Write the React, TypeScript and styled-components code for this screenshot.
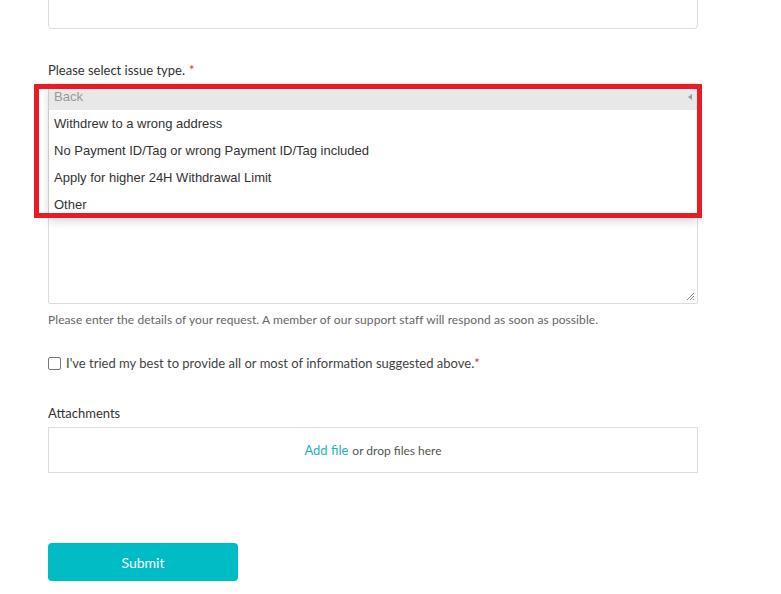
import styled, { createGlobalStyle } from 'styled-components';

const GlobalStyle = createGlobalStyle`
  body {
    margin: 0;
    background: #fff;
    font-family: Lato, "Open Sans", sans-serif;
    color: #333;
    overflow: hidden;
  }
`;

const Page = styled.div`
  width: 781px;
  height: 594px;
  padding: 0 84px 0 48px;
  box-sizing: border-box;
  position: relative;
`;

const Form = styled.form`
  display: flex;
  flex-direction: column;
  width: 650px;
`;

const TextInput = styled.div`
  height: 41px;
  margin-top: -12px;
  border: 1px solid #ddd;
  border-radius: 4px;
  box-sizing: border-box;
`;

const Label = styled.label<{ $top: number }>`
  display: block;
  margin-top: ${(p) => p.$top}px;
  font-size: 13px;
  line-height: 18px;
  color: #333;
`;

const Required = styled.span<{ $gap?: number }>`
  color: #e0323a;
  margin-left: ${(p) => p.$gap ?? 4}px;
`;

const SelectWrap = styled.div`
  position: relative;
  margin-top: 4px;
`;

const SelectBox = styled.div`
  height: 40px;
  border: 1px solid #ddd;
  border-radius: 4px;
  box-sizing: border-box;
`;

const Menu = styled.ul`
  position: absolute;
  top: 0;
  left: 0;
  right: 0;
  margin: 0;
  padding: 0;
  list-style: none;
  background: #fff;
  border-left: 1px solid #ccc;
  box-shadow: 0 4px 8px rgba(0, 0, 0, 0.14);
  font-family: "Liberation Sans", Arial, sans-serif;
  font-size: 13px;
  z-index: 2;
`;

const MenuItem = styled.li<{ $back?: boolean }>`
  display: flex;
  align-items: center;
  justify-content: space-between;
  height: 27px;
  padding: 0 6px 0 5px;
  color: ${(p) => (p.$back ? '#999' : '#333')};
  background: ${(p) => (p.$back ? '#e8e8e8' : '#fff')};
`;

const Caret = styled.span`
  width: 0;
  height: 0;
  border-top: 3px solid transparent;
  border-bottom: 3px solid transparent;
  border-right: 4px solid #999;
`;

const TextArea = styled.div`
  position: relative;
  height: 145px;
  margin-top: 36px;
  border: 1px solid #ddd;
  border-radius: 2px;
  box-sizing: border-box;
`;

const Grip = styled.svg`
  position: absolute;
  right: 2px;
  bottom: 2px;
`;

const Hint = styled.p`
  margin: 7px 0 0;
  font-size: 12px;
  line-height: 18px;
  letter-spacing: 0.08px;
  color: #666;
`;

const CheckRow = styled.label`
  display: flex;
  align-items: center;
  gap: 5px;
  margin-top: 25px;
  font-size: 13px;
  line-height: 18px;
  color: #444;
`;

const Box = styled.span`
  width: 13px;
  height: 13px;
  border: 1px solid #777;
  border-radius: 2px;
  box-sizing: border-box;
`;

const Drop = styled.div`
  display: flex;
  justify-content: center;
  align-items: center;
  height: 46px;
  margin-top: 5px;
  border: 1px solid #ddd;
  box-sizing: border-box;
  font-size: 12px;
  color: #555;
`;

const AddLink = styled.span`
  color: #1ab4c1;
  margin-right: 4px;
  font-size: 13px;
`;

const Submit = styled.button`
  margin-top: 70px;
  width: 190px;
  height: 38px;
  border: none;
  border-radius: 4px;
  background: #00bcc5;
  color: #fff;
  font-family: Lato, "Open Sans", sans-serif;
  font-size: 14px;
  cursor: pointer;
`;

const Highlight = styled.div`
  position: absolute;
  left: 34px;
  top: 84px;
  width: 668px;
  height: 134px;
  border: 5px solid #e81c26;
  box-sizing: border-box;
  z-index: 3;
  pointer-events: none;
`;

const options = [
  'Withdrew to a wrong address',
  'No Payment ID/Tag or wrong Payment ID/Tag included',
  'Apply for higher 24H Withdrawal Limit',
  'Other',
];

export default function App() {
  return (
    <Page>
      <GlobalStyle />
      <Form>
        <TextInput />
        <Label $top={32}>
          Please select issue type.<Required>*</Required>
        </Label>
        <SelectWrap>
          <SelectBox />
          <Menu>
            <MenuItem $back>
              Back
              <Caret />
            </MenuItem>
            {options.map((o) => (
              <MenuItem key={o}>{o}</MenuItem>
            ))}
          </Menu>
        </SelectWrap>
        <TextArea>
          <Grip width="9" height="9" viewBox="0 0 9 9">
            <path d="M8 1L1 8M8 4L4 8M8 7L7 8" stroke="#888" strokeWidth="1" />
          </Grip>
        </TextArea>
        <Hint>
          Please enter the details of your request. A member of our support staff will respond as soon as possible.
        </Hint>
        <CheckRow>
          <Box />
          I've tried my best to provide all or most of information suggested above.
          <Required $gap={-5}>*</Required>
        </CheckRow>
        <Label $top={32}>Attachments</Label>
        <Drop>
          <AddLink>Add file</AddLink> or drop files here
        </Drop>
        <Submit type="button">Submit</Submit>
      </Form>
      <Highlight />
    </Page>
  );
}
